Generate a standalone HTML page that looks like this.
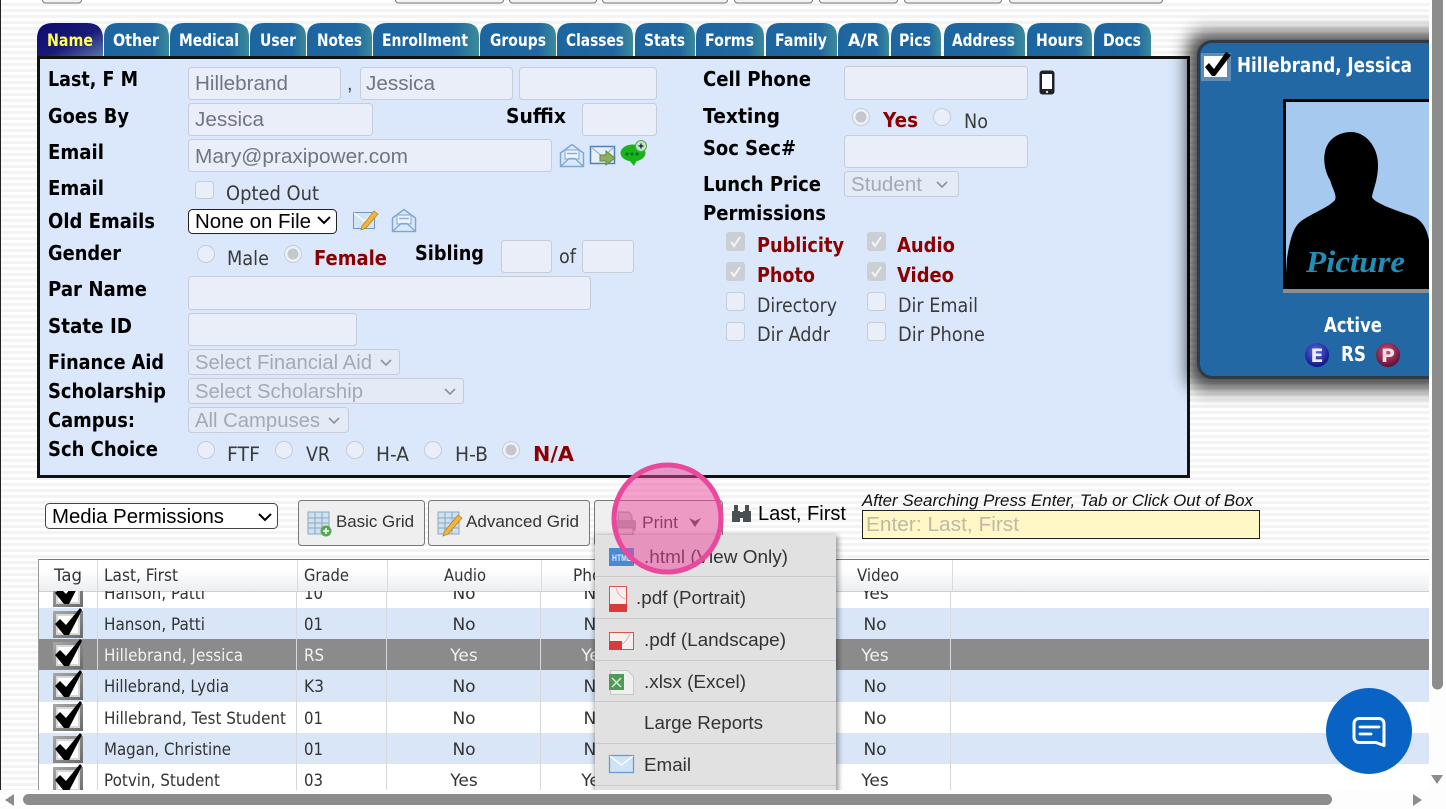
<!DOCTYPE html>
<html><head><meta charset="utf-8"><title>Student</title>
<style>
html,body{margin:0;padding:0;background:#fff;overflow:hidden}
svg{display:block}
text{white-space:pre}
.l{font:bold 20px "DejaVu Sans",sans-serif;fill:#000}
.t{font:bold 17px "DejaVu Sans",sans-serif;fill:#fff}
.n{font:19.5px "DejaVu Sans",sans-serif;fill:#3a3a3a}
.r{font:bold 20px "DejaVu Sans",sans-serif;fill:#8b0000}
.i{font:20px "Liberation Sans",sans-serif;fill:#6f7682}
.d{font:20px "Liberation Sans",sans-serif;fill:#a3aab6}
.k{font:20px "Liberation Sans",sans-serif;fill:#000}
.b{font:17px "Liberation Sans",sans-serif;fill:#333}
.g{font:17px "DejaVu Sans",sans-serif;fill:#333}
.w{font:17px "DejaVu Sans",sans-serif;fill:#f2f2f2}
.m{font:18.5px "Liberation Sans",sans-serif;fill:#333}
</style></head>
<body>
<svg width="1446" height="809" viewBox="0 0 1446 809" xmlns="http://www.w3.org/2000/svg">
<defs>
<pattern id="st" width="6" height="6" patternUnits="userSpaceOnUse"><rect width="6" height="6" fill="#ffffff"/><rect y="3" width="6" height="3" fill="#f2f3f2"/></pattern>
<linearGradient id="tab" x1="0" y1="0" x2="1" y2="0"><stop offset="0" stop-color="#1d659f"/><stop offset=".75" stop-color="#1f68a2"/><stop offset="1" stop-color="#3c8a98"/></linearGradient>
<linearGradient id="tab1" x1="0" y1="0" x2="1" y2="1"><stop offset="0" stop-color="#0b0b6e"/><stop offset=".55" stop-color="#1a1a78"/><stop offset="1" stop-color="#5a7aa8"/></linearGradient>
<linearGradient id="hd" x1="0" y1="0" x2="0" y2="1"><stop offset="0" stop-color="#fff"/><stop offset=".3" stop-color="#fff"/><stop offset="1" stop-color="#eceef0"/></linearGradient>
<linearGradient id="bev" x1="0" y1="0" x2="1" y2="1"><stop offset="0" stop-color="#a8a8a8"/><stop offset="1" stop-color="#6a6a6a"/></linearGradient>
<radialGradient id="ballE" cx=".45" cy=".35" r=".7"><stop offset="0" stop-color="#5a6ee8"/><stop offset="1" stop-color="#0b0b7a"/></radialGradient>
<radialGradient id="ballP" cx=".45" cy=".35" r=".7"><stop offset="0" stop-color="#c8507a"/><stop offset="1" stop-color="#5a0a2a"/></radialGradient>
<filter id="sh" x="-25%" y="-25%" width="150%" height="150%"><feGaussianBlur stdDeviation="9"/></filter>
<filter id="sh2" x="-20%" y="-20%" width="140%" height="140%"><feGaussianBlur stdDeviation="3"/></filter>
<clipPath id="rows"><rect x="38" y="591" width="1391" height="199"/></clipPath>
<clipPath id="card"><rect x="1150" y="0" width="279" height="480"/></clipPath>
<clipPath id="menu"><rect x="585" y="530" width="262" height="260"/></clipPath>
<symbol id="ck" viewBox="0 0 30 32" width="30" height="32"><rect x="0" y="3" width="30" height="27" fill="url(#bev)"/><rect x="3" y="6" width="24" height="21" fill="#d8d8d8"/><rect x="5" y="8" width="20" height="17" fill="#fff"/><path d="M2 16 L7 11 L13 17 L27 0 L29 2 L16 27 L11 27Z" fill="#000"/></symbol>
<symbol id="env" viewBox="0 0 26 25" width="26" height="25"><path d="M1.500 10 L13 1.500 L24.500 10 V23.500 H1.500Z" fill="#dbe8fb" stroke="#7fa7d2" stroke-width="1.500"/><rect x="6" y="7" width="14" height="9" fill="#eef4fc" stroke="#8eb0d6" stroke-width="1.200"/><path d="M8 10.500H18" stroke="#8eb0d6" stroke-width="1.500"/><path d="M1.500 23.500 L10 15.500 H16 L24.500 23.500" fill="none" stroke="#7fa7d2" stroke-width="1.300"/></symbol>
</defs>

<rect width="1446" height="809" fill="#fff"/>
<rect width="1429" height="790" fill="url(#st)"/>
<rect x="0" y="0" width="1" height="790" fill="#222"/>

<!-- top fragments -->
<g fill="#f3f3f3" stroke="#777" stroke-width="1">
<rect x="42.500" y="-10" width="39" height="13" rx="3"/>
<rect x="395.500" y="-10" width="108" height="13" rx="3"/>
<rect x="509.500" y="-10" width="87" height="13" rx="3"/>
<rect x="602.500" y="-10" width="125" height="13" rx="3"/>
<rect x="734.500" y="-10" width="78" height="13" rx="3"/>
<rect x="819.500" y="-10" width="78" height="13" rx="3"/>
<rect x="904.500" y="-10" width="97" height="13" rx="3"/>
<rect x="1009.500" y="-10" width="153" height="13" rx="3"/>
</g>

<!-- tabs -->
<path d="M37 57V39Q37 23 53 23H87Q103 23 103 39V57Z" fill="url(#tab1)"/>
<g fill="url(#tab)">
<path d="M104 57V37Q104 23 118 23H155Q169 23 169 37V57Z"/>
<path d="M170 57V37Q170 23 184 23H235Q249 23 249 37V57Z"/>
<path d="M250 57V37Q250 23 264 23H292Q306 23 306 37V57Z"/>
<path d="M307 57V37Q307 23 321 23H358Q372 23 372 37V57Z"/>
<path d="M373 57V37Q373 23 387 23H465Q479 23 479 37V57Z"/>
<path d="M480 57V37Q480 23 494 23H542Q556 23 556 37V57Z"/>
<path d="M557 57V37Q557 23 571 23H619Q633 23 633 37V57Z"/>
<path d="M635 57V37Q635 23 649 23H681Q695 23 695 37V57Z"/>
<path d="M696 57V37Q696 23 710 23H750Q764 23 764 37V57Z"/>
<path d="M766 57V37Q766 23 780 23H823Q837 23 837 37V57Z"/>
<path d="M838 57V37Q838 23 852 23H875Q889 23 889 37V57Z"/>
<path d="M891 57V37Q891 23 905 23H927Q941 23 941 37V57Z"/>
<path d="M944 57V37Q944 23 958 23H1011Q1025 23 1025 37V57Z"/>
<path d="M1027 57V37Q1027 23 1041 23H1078Q1092 23 1092 37V57Z"/>
<path d="M1094 57V37Q1094 23 1108 23H1137Q1151 23 1151 37V57Z"/>
</g>
<text class="t" style="fill:#ffff55" x="47" y="46" textLength="46" lengthAdjust="spacingAndGlyphs">Name</text>
<text class="t" x="113" y="46" textLength="46" lengthAdjust="spacingAndGlyphs">Other</text>
<text class="t" x="179" y="46" textLength="60" lengthAdjust="spacingAndGlyphs">Medical</text>
<text class="t" x="260" y="46" textLength="36" lengthAdjust="spacingAndGlyphs">User</text>
<text class="t" x="317" y="46" textLength="45" lengthAdjust="spacingAndGlyphs">Notes</text>
<text class="t" x="382" y="46" textLength="86" lengthAdjust="spacingAndGlyphs">Enrollment</text>
<text class="t" x="490" y="46" textLength="56" lengthAdjust="spacingAndGlyphs">Groups</text>
<text class="t" x="566" y="46" textLength="58" lengthAdjust="spacingAndGlyphs">Classes</text>
<text class="t" x="644" y="46" textLength="41" lengthAdjust="spacingAndGlyphs">Stats</text>
<text class="t" x="705" y="46" textLength="49" lengthAdjust="spacingAndGlyphs">Forms</text>
<text class="t" x="775" y="46" textLength="52" lengthAdjust="spacingAndGlyphs">Family</text>
<text class="t" x="848" y="46" textLength="31" lengthAdjust="spacingAndGlyphs">A/R</text>
<text class="t" x="899" y="46" textLength="32" lengthAdjust="spacingAndGlyphs">Pics</text>
<text class="t" x="952" y="46" textLength="63" lengthAdjust="spacingAndGlyphs">Address</text>
<text class="t" x="1036" y="46" textLength="47" lengthAdjust="spacingAndGlyphs">Hours</text>
<text class="t" x="1103" y="46" textLength="38" lengthAdjust="spacingAndGlyphs">Docs</text>

<!-- panel -->
<rect x="38.500" y="57.500" width="1150" height="419" fill="#dbe8fb" stroke="#111" stroke-width="3"/>

<!-- inputs -->
<g fill="#e9eef8" stroke="#c6ccd8" stroke-width="1">
<rect x="188.500" y="67.500" width="152" height="32" rx="3"/>
<rect x="360.500" y="67.500" width="152" height="32" rx="3"/>
<rect x="519.500" y="67.500" width="137" height="32" rx="3"/>
<rect x="188.500" y="103.500" width="184" height="32" rx="3"/>
<rect x="582.500" y="103.500" width="74" height="32" rx="3"/>
<rect x="188.500" y="139.500" width="363" height="32" rx="3"/>
<rect x="501.500" y="240.500" width="50" height="32" rx="3"/>
<rect x="582.500" y="240.500" width="51" height="32" rx="3"/>
<rect x="188.500" y="276.500" width="402" height="33" rx="3"/>
<rect x="188.500" y="313.500" width="168" height="32" rx="3"/>
<rect x="844.500" y="66.500" width="183" height="33" rx="3"/>
<rect x="844.500" y="135.500" width="183" height="32" rx="3"/>
</g>
<g fill="#e4ebf7" stroke="#c6ccd8" stroke-width="1">
<rect x="188.500" y="349.500" width="211" height="25" rx="3"/>
<rect x="188.500" y="378.500" width="275" height="25" rx="3"/>
<rect x="188.500" y="407.500" width="160" height="25" rx="3"/>
<rect x="844.500" y="171.500" width="114" height="25" rx="3"/>
</g>
<rect x="188.500" y="209.500" width="148" height="24" rx="4" fill="#fff" stroke="#222" stroke-width="1"/>

<!-- labels -->
<g transform="translate(0,1)">
<text class="l" x="48" y="85" textLength="90" lengthAdjust="spacingAndGlyphs">Last, F M</text>
<text class="l" x="48" y="122" textLength="81" lengthAdjust="spacingAndGlyphs">Goes By</text>
<text class="l" x="48" y="158" textLength="56" lengthAdjust="spacingAndGlyphs">Email</text>
<text class="l" x="48" y="194" textLength="56" lengthAdjust="spacingAndGlyphs">Email</text>
<text class="l" x="48" y="227" textLength="107" lengthAdjust="spacingAndGlyphs">Old Emails</text>
<text class="l" x="48" y="259" textLength="73" lengthAdjust="spacingAndGlyphs">Gender</text>
<text class="l" x="48" y="295" textLength="99" lengthAdjust="spacingAndGlyphs">Par Name</text>
<text class="l" x="48" y="332" textLength="84" lengthAdjust="spacingAndGlyphs">State ID</text>
<text class="l" x="48" y="368" textLength="116" lengthAdjust="spacingAndGlyphs">Finance Aid</text>
<text class="l" x="48" y="397" textLength="118" lengthAdjust="spacingAndGlyphs">Scholarship</text>
<text class="l" x="48" y="426" textLength="87" lengthAdjust="spacingAndGlyphs">Campus:</text>
<text class="l" x="48" y="455" textLength="110" lengthAdjust="spacingAndGlyphs">Sch Choice</text>
<text class="l" x="506" y="122" textLength="60" lengthAdjust="spacingAndGlyphs">Suffix</text>
<text class="l" x="415" y="259" textLength="69" lengthAdjust="spacingAndGlyphs">Sibling</text>
<text class="l" x="703" y="85" textLength="108" lengthAdjust="spacingAndGlyphs">Cell Phone</text>
<text class="l" x="703" y="122" textLength="77" lengthAdjust="spacingAndGlyphs">Texting</text>
<text class="l" x="703" y="154" textLength="93" lengthAdjust="spacingAndGlyphs">Soc Sec#</text>
<text class="l" x="703" y="190" textLength="118" lengthAdjust="spacingAndGlyphs">Lunch Price</text>
<text class="l" x="703" y="219" textLength="123" lengthAdjust="spacingAndGlyphs">Permissions</text>
</g>

<!-- input text -->
<text class="i" x="195" y="90" textLength="93" lengthAdjust="spacingAndGlyphs">Hillebrand</text>
<text class="k" x="347" y="90" style="fill:#444">,</text>
<text class="i" x="366" y="90" textLength="69" lengthAdjust="spacingAndGlyphs">Jessica</text>
<text class="i" x="195" y="126" textLength="69" lengthAdjust="spacingAndGlyphs">Jessica</text>
<text class="i" x="195" y="163" textLength="213" lengthAdjust="spacingAndGlyphs">Mary@praxipower.com</text>
<text class="k" x="195" y="228" textLength="116" lengthAdjust="spacingAndGlyphs">None on File</text>
<path d="M318 217l6 6 6-6" fill="none" stroke="#000" stroke-width="2"/>
<text class="d" x="195" y="369" textLength="177" lengthAdjust="spacingAndGlyphs">Select Financial Aid</text>
<path d="M381 360l5 5 5-5" fill="none" stroke="#8b929e" stroke-width="1.600"/>
<text class="d" x="195" y="398" textLength="168" lengthAdjust="spacingAndGlyphs">Select Scholarship</text>
<path d="M445 389l5 5 5-5" fill="none" stroke="#8b929e" stroke-width="1.600"/>
<text class="d" x="195" y="427" textLength="125" lengthAdjust="spacingAndGlyphs">All Campuses</text>
<path d="M329 418l5 5 5-5" fill="none" stroke="#8b929e" stroke-width="1.600"/>
<text class="d" x="851" y="191" textLength="71" lengthAdjust="spacingAndGlyphs">Student</text>
<path d="M937 182l5 5 5-5" fill="none" stroke="#8b929e" stroke-width="1.600"/>

<!-- plain options -->
<text class="n" x="226" y="200" textLength="93" lengthAdjust="spacingAndGlyphs">Opted Out</text>
<text class="n" x="227" y="265" textLength="42" lengthAdjust="spacingAndGlyphs">Male</text>
<text class="r" x="314" y="265" textLength="73" lengthAdjust="spacingAndGlyphs">Female</text>
<text class="n" x="559" y="263" textLength="17" lengthAdjust="spacingAndGlyphs">of</text>
<text class="n" x="227" y="461" textLength="33" lengthAdjust="spacingAndGlyphs">FTF</text>
<text class="n" x="306" y="461" textLength="24" lengthAdjust="spacingAndGlyphs">VR</text>
<text class="n" x="376" y="461" textLength="33" lengthAdjust="spacingAndGlyphs">H-A</text>
<text class="n" x="455" y="461" textLength="33" lengthAdjust="spacingAndGlyphs">H-B</text>
<text class="r" x="533" y="461" textLength="41" lengthAdjust="spacingAndGlyphs">N/A</text>
<text class="r" x="883" y="127" textLength="35" lengthAdjust="spacingAndGlyphs">Yes</text>
<text class="n" x="964" y="128" textLength="24" lengthAdjust="spacingAndGlyphs">No</text>
<text class="r" x="757" y="252" textLength="87" lengthAdjust="spacingAndGlyphs">Publicity</text>
<text class="r" x="897" y="252" textLength="58" lengthAdjust="spacingAndGlyphs">Audio</text>
<text class="r" x="757" y="282" textLength="58" lengthAdjust="spacingAndGlyphs">Photo</text>
<text class="r" x="897" y="282" textLength="57" lengthAdjust="spacingAndGlyphs">Video</text>
<text class="n" x="757" y="312" textLength="80" lengthAdjust="spacingAndGlyphs">Directory</text>
<text class="n" x="898" y="312" textLength="80" lengthAdjust="spacingAndGlyphs">Dir Email</text>
<text class="n" x="757" y="341" textLength="73" lengthAdjust="spacingAndGlyphs">Dir Addr</text>
<text class="n" x="898" y="341" textLength="87" lengthAdjust="spacingAndGlyphs">Dir Phone</text>

<!-- radios -->
<g fill="#e9eef8" stroke="#c6ccd8">
<circle cx="206" cy="254" r="8.500"/><circle cx="942" cy="117" r="8.500"/>
<circle cx="206" cy="450" r="8.500"/><circle cx="284" cy="450" r="8.500"/><circle cx="355" cy="450" r="8.500"/><circle cx="433" cy="450" r="8.500"/>
</g>
<g fill="#eef1f6" stroke="#c6ccd8"><circle cx="293" cy="254" r="8.500"/><circle cx="861" cy="117" r="8.500"/><circle cx="511" cy="450" r="8.500"/></g>
<g fill="#c4c7cc"><circle cx="293" cy="254" r="5.500"/><circle cx="861" cy="117" r="5.500"/><circle cx="511" cy="450" r="5.500"/></g>

<!-- checkboxes -->
<g fill="#e9eef8" stroke="#c6ccd8">
<rect x="195.500" y="181.500" width="18" height="17" rx="3"/>
<rect x="726.500" y="292.500" width="18" height="18" rx="3"/>
<rect x="867.500" y="292.500" width="18" height="18" rx="3"/>
<rect x="726.500" y="322.500" width="18" height="18" rx="3"/>
<rect x="867.500" y="322.500" width="18" height="18" rx="3"/>
</g>
<g fill="#cbced2"><rect x="726" y="232" width="19" height="19" rx="3"/><rect x="867" y="232" width="19" height="19" rx="3"/><rect x="726" y="262" width="19" height="19" rx="3"/><rect x="867" y="262" width="19" height="19" rx="3"/></g>
<g fill="none" stroke="#f4f4f4" stroke-width="2"><path d="M731 242l3 4 6-9"/><path d="M872 242l3 4 6-9"/><path d="M731 272l3 4 6-9"/><path d="M872 272l3 4 6-9"/></g>

<!-- panel icons -->
<use href="#env" x="559" y="143"/>
<use href="#env" x="391" y="208"/>
<rect x="590.500" y="146.500" width="24" height="17" fill="#e8eef6" stroke="#4f7fb5" stroke-width="1.500"/>
<path d="M591 147l12 10 11-10" fill="none" stroke="#9db8d6" stroke-width="1.300"/>
<path d="M600 155h6v-4l9 7-9 7v-4h-6z" fill="#8fae5e" stroke="#5f8a3e" stroke-width="1"/>
<ellipse cx="633" cy="153" rx="12.500" ry="8.500" fill="#18b418"/>
<path d="M629 160l5 6 3-6z" fill="#18b418"/>
<circle cx="627" cy="154" r="1.500" fill="#063"/><circle cx="632" cy="154" r="1.500" fill="#063"/><circle cx="637" cy="154" r="1.500" fill="#063"/>
<circle cx="641" cy="146" r="5.500" fill="#bfe8bf" stroke="#5aa05a"/><path d="M638.500 146h5M641 143.500v5" stroke="#114" stroke-width="1.300"/>
<rect x="353.500" y="212.500" width="21" height="16" fill="#d5e4f5" stroke="#6d96c4"/>
<path d="M354 213l10 8 10-8" fill="none" stroke="#fff" stroke-width="1.300"/>
<path d="M362 226l12-15 4 3-12 14-5 2z" fill="#eeb540" stroke="#b98420" stroke-width=".8"/>
<rect x="1039.500" y="70.500" width="15" height="24" rx="3" fill="#222"/>
<rect x="1042" y="74" width="10" height="15" fill="#fff"/>
<circle cx="1047" cy="92" r="1.200" fill="#ddd"/>

<!-- card -->
<g clip-path="url(#card)">
<rect x="1188" y="33" width="270" height="356" rx="15" fill="#000" opacity=".75" filter="url(#sh)"/>
<rect x="1198.500" y="41.500" width="260" height="336" rx="14" fill="#2268a5" stroke="#2f3b47" stroke-width="3"/>
<rect x="1201" y="53" width="30" height="28" fill="#5f8db5"/>
<rect x="1204" y="56" width="23" height="21" fill="#fff"/>
<path d="M1205 67 L1209 63 L1214 69 L1226 52 L1231 55 L1215 76 L1212 76Z" fill="#000"/>
<text class="l" style="fill:#fff" x="1237" y="72" textLength="175" lengthAdjust="spacingAndGlyphs">Hillebrand, Jessica</text>
<rect x="1283" y="99" width="150" height="194" fill="#000"/>
<rect x="1286" y="102" width="147" height="187" fill="#a6c9ef"/>
<path d="M1351 132C1365 132 1378 146 1378 165C1378 180 1373 190 1372 197C1374 203 1395 210 1412 216C1423 220 1427 230 1429 240L1429 289L1285 289L1287 258C1290 240 1293 228 1300 222C1310 214 1328 208 1335 200C1337 195 1333 190 1330 180C1325 172 1323 160 1325 152C1327 140 1338 132 1351 132Z" fill="#000"/>
<rect x="1283" y="289" width="150" height="4" fill="#8a8f94"/>
<text x="1306" y="272" textLength="99" lengthAdjust="spacingAndGlyphs" style="font:italic bold 31px 'Liberation Serif',serif;fill:#1f8fb8">Picture</text>
<text class="l" style="fill:#fff" x="1324" y="332" textLength="58" lengthAdjust="spacingAndGlyphs">Active</text>
<text class="l" style="fill:#fff" x="1341" y="361" textLength="25" lengthAdjust="spacingAndGlyphs">RS</text>
<circle cx="1317" cy="355" r="12" fill="url(#ballE)"/>
<text x="1317" y="362" text-anchor="middle" style="font:bold 19px 'DejaVu Sans',sans-serif;fill:#eef">E</text>
<circle cx="1388" cy="355" r="12" fill="url(#ballP)"/>
<text x="1388" y="362" text-anchor="middle" style="font:bold 19px 'DejaVu Sans',sans-serif;fill:#f3dfe6">P</text>
</g>

<!-- toolbar -->
<rect x="45.500" y="503.500" width="232" height="25" rx="4" fill="#fff" stroke="#444"/>
<text class="k" x="52" y="523" textLength="172" lengthAdjust="spacingAndGlyphs">Media Permissions</text>
<path d="M259 514l6 6 6-6" fill="none" stroke="#000" stroke-width="2"/>
<rect x="298.500" y="500.500" width="126" height="45" rx="3" fill="#efefef" stroke="#777"/>
<rect x="428.500" y="500.500" width="161" height="45" rx="3" fill="#efefef" stroke="#777"/>
<rect x="594.500" y="500.500" width="128" height="45" rx="3" fill="#efefef" stroke="#777"/>
<rect x="308" y="512" width="21" height="22" fill="#cfe0ee" stroke="#8aa8c0"/>
<path d="M308 518h21M308 523h21M308 528h21M315 512v22M322 512v22" stroke="#8aa8c0"/>
<circle cx="326" cy="531" r="5.500" fill="#55a855"/><path d="M323 531h6M326 528v6" stroke="#fff" stroke-width="1.500"/>
<rect x="438" y="512" width="21" height="22" fill="#cfe0ee" stroke="#8aa8c0"/>
<path d="M438 518h21M438 523h21M438 528h21M445 512v22M452 512v22" stroke="#8aa8c0"/>
<path d="M444 532l14-17 4 3-14 16-5 2z" fill="#efb540" stroke="#b98420" stroke-width=".8"/>
<text class="b" x="336" y="527" textLength="78" lengthAdjust="spacingAndGlyphs">Basic Grid</text>
<text class="b" x="466" y="527" textLength="113" lengthAdjust="spacingAndGlyphs">Advanced Grid</text>
<path d="M618 512h11l3 4v5h-14z" fill="#ccc" stroke="#999"/>
<rect x="615" y="520" width="21" height="11" rx="2" fill="#aaa"/>
<rect x="618" y="528" width="15" height="7" fill="#ddd" stroke="#999"/>
<text class="b" x="642" y="528" textLength="36" lengthAdjust="spacingAndGlyphs">Print</text>
<path d="M689 518l6 9 6-9-6 3z" fill="#444"/>
<path d="M732 511h8v11h-8zM743 511h8v11h-8zM734 505h4v6h-4zM745 505h4v6h-4zM739 512h5v6h-5z" fill="#4a4f54"/>
<text class="k" x="758" y="520" textLength="88" lengthAdjust="spacingAndGlyphs">Last, First</text>
<text x="862" y="506" textLength="391" lengthAdjust="spacingAndGlyphs" style="font:italic 17px 'Liberation Sans',sans-serif;fill:#111">After Searching Press Enter, Tab or Click Out of Box</text>
<rect x="862.500" y="510.500" width="397" height="28" fill="#fff7c6" stroke="#222"/>
<text x="866" y="531" textLength="153" lengthAdjust="spacingAndGlyphs" style="font:20px 'Liberation Sans',sans-serif;fill:#bdb9a6">Enter: Last, First</text>

<!-- grid -->
<rect x="38" y="559" width="1391" height="231" fill="#fff"/>
<rect x="38" y="559" width="1391" height="1" fill="#777"/>
<rect x="38" y="559" width="1" height="231" fill="#999"/>
<rect x="39" y="560" width="1390" height="31" fill="url(#hd)"/>
<rect x="39" y="591" width="1390" height="1" fill="#cfcfcf"/>
<g fill="#dcdcdc"><rect x="97" y="560" width="1" height="31"/><rect x="297" y="560" width="1" height="31"/><rect x="387" y="560" width="1" height="31"/><rect x="541" y="560" width="1" height="31"/><rect x="952" y="560" width="1" height="31"/></g>
<text class="g" x="54" y="581" textLength="28" lengthAdjust="spacingAndGlyphs">Tag</text>
<text class="g" x="104" y="581" textLength="74" lengthAdjust="spacingAndGlyphs">Last, First</text>
<text class="g" x="304" y="581" textLength="45" lengthAdjust="spacingAndGlyphs">Grade</text>
<text class="g" x="444" y="581" textLength="42" lengthAdjust="spacingAndGlyphs">Audio</text>
<text class="g" x="573" y="581" textLength="44" lengthAdjust="spacingAndGlyphs">Photo</text>
<text class="g" x="857" y="581" textLength="42" lengthAdjust="spacingAndGlyphs">Video</text>

<g clip-path="url(#rows)">
<rect x="39" y="592" width="1390" height="16" fill="#fff"/>
<rect x="39" y="608" width="1390" height="31" fill="#d9e6f7"/>
<rect x="39" y="639" width="1390" height="31" fill="#8b8b8b"/>
<rect x="39" y="670" width="1390" height="32" fill="#d9e6f7"/>
<rect x="39" y="702" width="1390" height="31" fill="#fff"/>
<rect x="39" y="733" width="1390" height="31" fill="#d9e6f7"/>
<rect x="39" y="764" width="1390" height="26" fill="#fff"/>
<g fill="#d8d8d8"><rect x="97" y="592" width="1" height="198"/><rect x="296" y="592" width="1" height="198"/><rect x="386" y="592" width="1" height="198"/><rect x="540" y="592" width="1" height="198"/><rect x="950" y="592" width="1" height="198"/></g>
<use href="#ck" x="53" y="577"/><use href="#ck" x="53" y="608"/><use href="#ck" x="53" y="639"/><use href="#ck" x="53" y="670"/><use href="#ck" x="53" y="701"/><use href="#ck" x="53" y="733"/><use href="#ck" x="53" y="764"/>
<text class="g" x="104" y="599" textLength="101" lengthAdjust="spacingAndGlyphs">Hanson, Patti</text>
<text class="g" x="304" y="599" textLength="19" lengthAdjust="spacingAndGlyphs">10</text>
<text class="g" x="464" y="599" text-anchor="middle">No</text>
<text class="g" x="595" y="599" text-anchor="middle">No</text>
<text class="g" x="875" y="599" text-anchor="middle">Yes</text>
<text class="g" x="104" y="630" textLength="101" lengthAdjust="spacingAndGlyphs">Hanson, Patti</text>
<text class="g" x="304" y="630" textLength="19" lengthAdjust="spacingAndGlyphs">01</text>
<text class="g" x="464" y="630" text-anchor="middle">No</text>
<text class="g" x="595" y="630" text-anchor="middle">No</text>
<text class="g" x="875" y="630" text-anchor="middle">No</text>
<text class="w" x="104" y="661" textLength="139" lengthAdjust="spacingAndGlyphs">Hillebrand, Jessica</text>
<text class="w" x="304" y="661" textLength="20" lengthAdjust="spacingAndGlyphs">RS</text>
<text class="w" x="464" y="661" text-anchor="middle">Yes</text>
<text class="w" x="595" y="661" text-anchor="middle">Yes</text>
<text class="w" x="875" y="661" text-anchor="middle">Yes</text>
<text class="g" x="104" y="692" textLength="125" lengthAdjust="spacingAndGlyphs">Hillebrand, Lydia</text>
<text class="g" x="304" y="692" textLength="20" lengthAdjust="spacingAndGlyphs">K3</text>
<text class="g" x="464" y="692" text-anchor="middle">No</text>
<text class="g" x="595" y="692" text-anchor="middle">No</text>
<text class="g" x="875" y="692" text-anchor="middle">No</text>
<text class="g" x="104" y="724" textLength="182" lengthAdjust="spacingAndGlyphs">Hillebrand, Test Student</text>
<text class="g" x="304" y="724" textLength="19" lengthAdjust="spacingAndGlyphs">01</text>
<text class="g" x="464" y="724" text-anchor="middle">No</text>
<text class="g" x="595" y="724" text-anchor="middle">No</text>
<text class="g" x="875" y="724" text-anchor="middle">No</text>
<text class="g" x="104" y="755" textLength="127" lengthAdjust="spacingAndGlyphs">Magan, Christine</text>
<text class="g" x="304" y="755" textLength="19" lengthAdjust="spacingAndGlyphs">01</text>
<text class="g" x="464" y="755" text-anchor="middle">No</text>
<text class="g" x="595" y="755" text-anchor="middle">No</text>
<text class="g" x="875" y="755" text-anchor="middle">No</text>
<text class="g" x="104" y="786" textLength="116" lengthAdjust="spacingAndGlyphs">Potvin, Student</text>
<text class="g" x="304" y="786" textLength="19" lengthAdjust="spacingAndGlyphs">03</text>
<text class="g" x="464" y="786" text-anchor="middle">Yes</text>
<text class="g" x="595" y="786" text-anchor="middle">Yes</text>
<text class="g" x="875" y="786" text-anchor="middle">Yes</text>
</g>

<!-- dropdown -->
<g clip-path="url(#menu)">
<rect x="595" y="536" width="243" height="270" fill="#000" opacity=".45" filter="url(#sh2)"/>
<rect x="595" y="535" width="241" height="270" fill="#e1e1e1"/>
<g fill="#cacaca"><rect x="595" y="576" width="241" height="1"/><rect x="595" y="618" width="241" height="1"/><rect x="595" y="660" width="241" height="1"/><rect x="595" y="701" width="241" height="1"/><rect x="595" y="743" width="241" height="1"/><rect x="595" y="785" width="241" height="1"/></g>
</g>
<rect x="609" y="548" width="25" height="18" fill="#4a8ad4"/>
<text x="621.500" y="561" text-anchor="middle" textLength="19" lengthAdjust="spacingAndGlyphs" style="font:bold 9px 'Liberation Sans',sans-serif;fill:#dfeeff">HTML</text>
<path d="M609.500 586.500h17v25h-17z" fill="#f4f0f0" stroke="#d9534f"/>
<rect x="609" y="604" width="18" height="8" fill="#d93a3a"/>
<path d="M616 588q2 8 9 11" fill="none" stroke="#eaa" stroke-width="1"/>
<rect x="609.500" y="632.500" width="24" height="17" fill="#f4f0f0" stroke="#d9534f"/>
<rect x="609" y="641" width="13" height="9" fill="#d93a3a"/>
<path d="M622 644q4-2 8-10" fill="none" stroke="#eaa" stroke-width="1"/>
<path d="M610.500 670.500h17l6 6v18h-23z" fill="#eef0ee" stroke="#c8c8c8"/>
<rect x="609" y="674" width="15" height="16" fill="#4f9a55"/>
<path d="M612 678l9 9M621 678l-9 9" stroke="#d8efd8" stroke-width="1.500"/>
<rect x="609.500" y="755.500" width="24" height="17" fill="#cfe2f7" stroke="#6d9ccc" stroke-width="1.300"/>
<path d="M610 756l11.500 9 11.500-9" fill="none" stroke="#fff" stroke-width="1.300"/>
<text class="m" x="644" y="563" textLength="144" lengthAdjust="spacingAndGlyphs">.html (View Only)</text>
<text class="m" x="636" y="604" textLength="110" lengthAdjust="spacingAndGlyphs">.pdf (Portrait)</text>
<text class="m" x="644" y="646" textLength="142" lengthAdjust="spacingAndGlyphs">.pdf (Landscape)</text>
<text class="m" x="644" y="688" textLength="102" lengthAdjust="spacingAndGlyphs">.xlsx (Excel)</text>
<text class="m" x="644" y="729" textLength="119" lengthAdjust="spacingAndGlyphs">Large Reports</text>
<text class="m" x="644" y="771" textLength="47" lengthAdjust="spacingAndGlyphs">Email</text>

<!-- highlight circle -->
<circle cx="667.500" cy="518.500" r="53.500" fill="#ec4899" fill-opacity=".5" stroke="#e9489c" stroke-width="5"/>

<!-- scrollbars -->
<rect x="1429" y="0" width="17" height="809" fill="#fdfdfd"/>
<rect x="0" y="790" width="1446" height="19" fill="#fdfdfd"/>
<path d="M1432 0h11v684a5.500 5.500 0 0 1-11 0z" fill="#8c8c8c"/>
<path d="M1431 775h12l-6 9z" fill="#8c8c8c"/>
<rect x="23" y="794" width="1309" height="11" rx="5.500" fill="#8c8c8c"/>
<path d="M14 794v12l-9-6z" fill="#8c8c8c"/>
<path d="M1413 794v12l9-6z" fill="#8c8c8c"/>

<!-- chat -->
<circle cx="1369" cy="731" r="43" fill="#0863c4"/>
<path d="M1359 718.500h20a5 5 0 0 1 5 5v22l-8-3h-17a5 5 0 0 1-5-5v-14a5 5 0 0 1 5-5z" fill="none" stroke="#fff" stroke-width="3" stroke-linejoin="round"/>
<path d="M1360 727h19M1360 734h11" stroke="#fff" stroke-width="2.800" stroke-linecap="round"/>
</svg>
</body></html>
